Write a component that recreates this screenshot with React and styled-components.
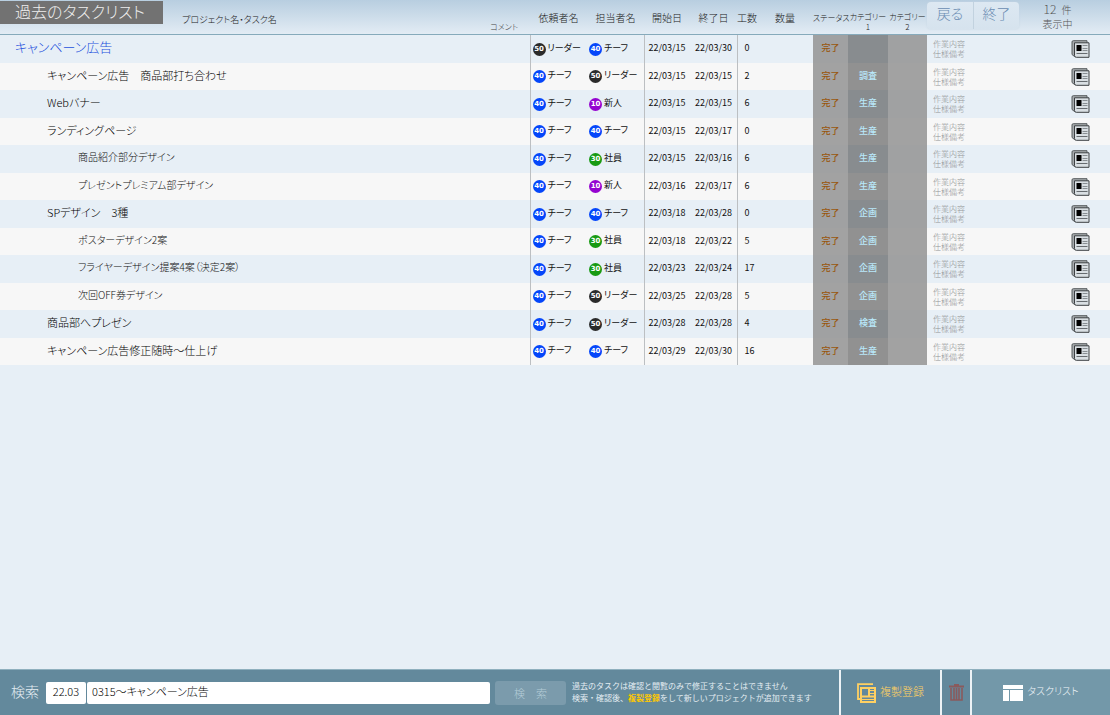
import React, { useState } from 'react';
import styled, { createGlobalStyle } from 'styled-components';

const GlobalStyle = createGlobalStyle`
  * {
    box-sizing: border-box;
  }

  body {
    margin: 0;
    background: #e7eff6;
    color: #222;
    font-family: 'Noto Sans CJK JP', sans-serif;
    font-weight: 300;
    font-feature-settings: 'palt';
  }

  button,
  input {
    font: inherit;
    font-feature-settings: inherit;
    color: inherit;
  }
`;

const Page = styled.div`
  min-height: 100vh;
  display: flex;
  flex-direction: column;
`;

const Main = styled.main`
  flex: 1;
`;

const TaskTable = styled.table`
  width: 100%;
  table-layout: fixed;
  border-collapse: collapse;

  th,
  td {
    padding: 0;
    font-weight: inherit;
    text-align: left;
    white-space: nowrap;
  }
`;

const Col = styled.col`
  width: ${({ $width }) => ($width ? `${$width}px` : 'auto')};
`;

const HeadRow = styled.tr`
  height: 35px;
  background: linear-gradient(#b8cee0, #e4edf5);
  box-shadow: inset 0 -1px 0 #86aabb;
`;

const HeadCell = styled.th`
  && {
    height: 35px;
    font-size: 10px;
    line-height: 12px;
    text-align: center;
  }
`;

const CategoryHead = styled(HeadCell)`
  && {
    padding-top: 8px;
    font-size: 8px;
    line-height: 10px;
  }
`;

const StatusHead = styled(HeadCell)`
  && {
    font-size: 8px;
  }
`;

const TitleBar = styled.div`
  height: 34px;
  display: flex;
  align-items: flex-start;
`;

const Title = styled.h1`
  width: 163px;
  height: 23px;
  margin: 0;
  padding-left: 15px;
  background: #727272;
  color: #eee;
  font-size: 16px;
  font-weight: 300;
  line-height: 20px;
`;

const NameLabel = styled.span`
  flex: 1;
  padding: 12px 0 0 19px;
  font-size: 9px;
  line-height: 14px;
`;

const CommentLabel = styled.span`
  padding: 20px 12px 0 0;
  color: #444;
  font-size: 8px;
  line-height: 12px;
`;

const HeadTools = styled.div`
  height: 34px;
  display: flex;
  align-items: flex-start;
`;

const ButtonGroup = styled.div`
  display: flex;
  margin-top: 1px;
  border-radius: 4px;
  overflow: hidden;
  background: linear-gradient(#dde8f2, #d6e3ee);
  box-shadow: 0 0 2px #c5d5e2;
`;

const HeadButton = styled.button`
  width: 46px;
  height: 27px;
  padding: 0 0 5px;
  border: 0;
  background: none;
  color: #6a8cb2;
  font-size: 14px;
  line-height: 22px;

  & + & {
    border-left: 1px solid #c2d2df;
  }
`;

const Count = styled.div`
  flex: 1;
  padding: 1px 14px 0 0;
  color: #555;
  font-size: 10px;
  line-height: 14px;
  text-align: center;

  strong {
    margin-right: 5px;
    font-size: 12px;
    font-weight: 300;
  }
`;

const Row = styled.tr`
  height: 28px;
  background: #e7eff6;

  &:nth-child(even) {
    height: 27px;
    background: #f7f7f7;
  }
`;

const levels = [
  { indent: 15, size: 13, color: '#1f52dd' },
  { indent: 47, size: 11, color: '#000' },
  { indent: 78, size: 10, color: '#111' },
];

const NameCell = styled.td`
  && {
    padding: 0 0 4px ${({ $level }) => levels[$level].indent}px;
    color: ${({ $level }) => levels[$level].color};
    font-size: ${({ $level }) => levels[$level].size}px;
    line-height: 20px;
  }
`;

const Cell = styled.td`
  && {
    padding-left: ${({ $indent }) => $indent || 0}px;
    border-left: ${({ $line }) => ($line ? '1px solid #bcbfc2' : '0')};
    color: #111;
    font-size: 9px;
    line-height: 12px;
  }
`;

const DateCell = styled(Cell)`
  && {
    padding-bottom: 2px;
    font-weight: 400;
  }
`;

const Person = styled.div`
  display: flex;
  align-items: center;
  gap: 2px;
`;

const rankColors = {
  50: '#2b2b2b',
  40: '#0546fa',
  30: '#189a12',
  10: '#9504d0',
};

const Rank = styled.span`
  width: 13px;
  height: 13px;
  flex: none;
  border-radius: 50%;
  background: ${({ $rank }) => rankColors[$rank]};
  color: #fff;
  font-family: 'DejaVu Sans', sans-serif;
  font-size: 7px;
  font-weight: 700;
  line-height: 13px;
  text-align: center;
`;

const PersonName = styled.span`
  padding-bottom: 3px;
  font-weight: 400;
`;

const tones = {
  status: { odd: '#a0a1a2', even: '#a2a2a2', text: '#99560c' },
  first: { odd: '#888c8f', even: '#919191', text: '#b9e8fa' },
  second: { odd: '#a0a1a2', even: '#a2a2a2', text: '#b9e8fa' },
};

const TagCell = styled.td`
  && {
    padding-bottom: 2px;
    background: ${({ $tone }) => tones[$tone].odd};
    color: ${({ $tone }) => tones[$tone].text};
    font-size: 9px;
    font-weight: 500;
    line-height: 12px;
    text-align: center;
  }

  tr:nth-child(even) > && {
    background: ${({ $tone }) => tones[$tone].even};
  }
`;

const NoteCell = styled.td`
  && {
    padding-left: 6px;
    color: #8f9294;
    font-size: 8px;
    line-height: 10px;
    font-feature-settings: normal;
  }
`;

const DetailButton = styled.button`
  display: block;
  margin: 0 auto;
  padding: 0;
  border: 0;
  background: none;
  line-height: 0;
`;

const Footer = styled.footer`
  height: 46px;
  display: flex;
  border-top: 1px solid #8fb0be;
  background: #63899c;
  color: #e3edf2;
`;

const SearchForm = styled.form`
  flex: 1;
  display: flex;
  align-items: center;
  padding-left: 11px;
`;

const SearchLabel = styled.label`
  width: 35px;
  padding-bottom: 4px;
  font-size: 14px;
  line-height: 20px;
`;

const SearchInput = styled.input`
  width: ${({ $width }) => ($width ? `${$width}px` : 'auto')};
  flex: ${({ $width }) => ($width ? 'none' : '1')};
  min-width: 0;
  height: 22px;
  margin-right: 1px;
  padding: 0 5px 3px;
  border: 0;
  border-radius: 2px;
  background: #fff;
  color: #000;
  font-size: 11px;
  text-align: ${({ $width }) => ($width ? 'center' : 'left')};
`;

const SearchButton = styled.button`
  width: 71px;
  height: 24px;
  margin: 0 6px 0 4px;
  padding: 0;
  border: 0;
  border-radius: 3px;
  background: #7b9bac;
  color: #b4ccd7;
  font-size: 11px;
`;

const Hint = styled.p`
  width: 267px;
  margin: 0;
  padding-bottom: 2px;
  font-size: 8px;
  font-weight: 400;
  line-height: 12px;
  font-feature-settings: normal;
  white-space: nowrap;

  em {
    color: #ffc800;
    font-style: normal;
    font-weight: 700;
  }
`;

const FooterButton = styled.button`
  width: ${({ $width }) => $width}px;
  display: flex;
  align-items: center;
  justify-content: center;
  gap: 4px;
  padding: 0;
  border: 0;
  border-left: 2px solid #edf3f6;
  background: ${({ $light }) => ($light ? '#7398a9' : 'none')};
  color: ${({ $color }) => $color || '#f0f6f9'};
  font-size: ${({ $light }) => ($light ? 10 : 11)}px;

  span {
    padding-bottom: 4px;
  }
`;

const NewsIcon = () => (
  <svg width="19" height="18" viewBox="0 0 19 18" aria-hidden="true">
    <path d="M1 14.5V2Q1 .7 2.3 .7H16v14L3.5 16.5Z" fill="#a6aaad" stroke="#555a5d" />
    <path d="M3.5 2.8h14.5v14.5H5.3q-1.8 0-1.8-1.8Z" fill="#d9dfe3" stroke="#3c4043" />
    <rect x="5.5" y="5" width="5" height="6" fill="#000" />
    <path d="M11.5 5.5h5M11.5 8.5h5M11.5 10.5h5" stroke="#888e92" />
    <path d="M5.5 13.5h11" stroke="#666b6f" />
  </svg>
);

const CopyIcon = () => (
  <svg width="19" height="20" viewBox="0 0 19 20" fill="none" stroke="#ffd062" aria-hidden="true">
    <path d="M16 1.2H1V16h2.5" strokeWidth="1.8" />
    <path d="M4 5h14v14H4Z" strokeWidth="2" />
    <path d="M12 5v8.5M5 13.5h13" strokeWidth="2" />
    <path d="M12 7.5h6M12 10.5h6M5 16.5h13" />
  </svg>
);

const TrashIcon = () => (
  <svg width="15" height="17" viewBox="0 0 15 17" fill="none" stroke="#8a5a5c" aria-hidden="true">
    <path d="M0 2.5h15M5 1h5" strokeWidth="2" />
    <path d="M2 4v12h11V4M5 4v12M7.5 4v12M10 4v12" strokeWidth="1.6" />
  </svg>
);

const BoardIcon = () => (
  <svg width="20" height="16" viewBox="0 0 20 16" fill="#fff" aria-hidden="true">
    <path d="M0 0h20v4H0zM0 5h6v11H0zM7 5h13v11H7z" />
  </svg>
);

const tasks = [
  [0, 'キャンペーン広告', 50, 40, '22/03/15', '22/03/30', 0, ''],
  [1, 'キャンペーン広告　商品部打ち合わせ', 40, 50, '22/03/15', '22/03/15', 2, '調査'],
  [1, 'Webバナー', 40, 10, '22/03/15', '22/03/15', 6, '生産'],
  [1, 'ランディングページ', 40, 40, '22/03/15', '22/03/17', 0, '生産'],
  [2, '商品紹介部分デザイン', 40, 30, '22/03/15', '22/03/16', 6, '生産'],
  [2, 'プレゼントプレミアム部デザイン', 40, 10, '22/03/16', '22/03/17', 6, '生産'],
  [1, 'SPデザイン　3種', 40, 40, '22/03/18', '22/03/28', 0, '企画'],
  [2, 'ポスターデザイン2案', 40, 30, '22/03/18', '22/03/22', 5, '企画'],
  [2, 'フライヤーデザイン提案4案（決定2案）', 40, 30, '22/03/23', '22/03/24', 17, '企画'],
  [2, '次回OFF券デザイン', 40, 50, '22/03/25', '22/03/28', 5, '企画'],
  [1, '商品部へプレゼン', 40, 50, '22/03/28', '22/03/28', 4, '検査'],
  [1, 'キャンペーン広告修正随時〜仕上げ', 40, 40, '22/03/29', '22/03/30', 16, '生産'],
];

const people = { 50: 'リーダー', 40: 'チーフ', 30: '社員', 10: '新人' };

const columns = [0, 57, 57, 46, 47, 20, 56, 35, 40, 39, 123, 60];

const PersonTag = ({ rank }) => (
  <Person>
    <Rank $rank={rank}>{rank}</Rank>
    <PersonName>{people[rank]}</PersonName>
  </Person>
);

const TaskRow = ({ task }) => {
  const [level, name, client, owner, start, end, effort, category] = task;
  return (
    <Row>
      <NameCell $level={level}>{name}</NameCell>
      <Cell $line $indent={2}>
        <PersonTag rank={client} />
      </Cell>
      <Cell $indent={2}>
        <PersonTag rank={owner} />
      </Cell>
      <DateCell $line $indent={4}>
        {start}
      </DateCell>
      <DateCell $indent={5}>{end}</DateCell>
      <DateCell $line $indent={7}>
        {effort}
      </DateCell>
      <Cell />
      <TagCell $tone="status">完了</TagCell>
      <TagCell $tone="first">{category}</TagCell>
      <TagCell $tone="second" />
      <NoteCell>
        作業内容
        <br />
        仕様備考
      </NoteCell>
      <td>
        <DetailButton type="button" aria-label={name}>
          <NewsIcon />
        </DetailButton>
      </td>
    </Row>
  );
};

const App = () => {
  const [month, setMonth] = useState('22.03');
  const [keyword, setKeyword] = useState('0315〜キャンペーン広告');

  return (
    <Page>
      <GlobalStyle />
      <Main>
        <TaskTable>
          <colgroup>
            {columns.map((width, i) => (
              <Col key={i} $width={width} />
            ))}
          </colgroup>
          <thead>
            <HeadRow>
              <th>
                <TitleBar>
                  <Title>過去のタスクリスト</Title>
                  <NameLabel>プロジェクト名・タスク名</NameLabel>
                  <CommentLabel>コメント</CommentLabel>
                </TitleBar>
              </th>
              <HeadCell>依頼者名</HeadCell>
              <HeadCell>担当者名</HeadCell>
              <HeadCell>開始日</HeadCell>
              <HeadCell>終了日</HeadCell>
              <HeadCell>工数</HeadCell>
              <HeadCell>数量</HeadCell>
              <StatusHead>ステータス</StatusHead>
              <CategoryHead>
                カテゴリー
                <br />1
              </CategoryHead>
              <CategoryHead>
                カテゴリー
                <br />2
              </CategoryHead>
              <th colSpan={2}>
                <HeadTools>
                  <ButtonGroup>
                    <HeadButton type="button">戻る</HeadButton>
                    <HeadButton type="button">終了</HeadButton>
                  </ButtonGroup>
                  <Count>
                    <strong>12</strong>件<br />
                    表示中
                  </Count>
                </HeadTools>
              </th>
            </HeadRow>
          </thead>
          <tbody>
            {tasks.map((task) => (
              <TaskRow key={task[1]} task={task} />
            ))}
          </tbody>
        </TaskTable>
      </Main>
      <Footer>
        <SearchForm onSubmit={(e) => e.preventDefault()}>
          <SearchLabel htmlFor="month">検索</SearchLabel>
          <SearchInput
            id="month"
            $width={40}
            value={month}
            onChange={(e) => setMonth(e.target.value)}
          />
          <SearchInput
            aria-label="検索"
            value={keyword}
            onChange={(e) => setKeyword(e.target.value)}
          />
          <SearchButton type="submit">検　索</SearchButton>
          <Hint>
            過去のタスクは確認と閲覧のみで修正することはできません
            <br />
            検索・確認後、<em>複製登録</em>をして新しいプロジェクトが追加できます
          </Hint>
        </SearchForm>
        <FooterButton type="button" $width={101} $color="#ffd062">
          <CopyIcon />
          <span>複製登録</span>
        </FooterButton>
        <FooterButton type="button" $width={30} aria-label="削除">
          <TrashIcon />
        </FooterButton>
        <FooterButton type="button" $width={140} $light>
          <BoardIcon />
          <span>タスクリスト</span>
        </FooterButton>
      </Footer>
    </Page>
  );
};

export default App;
